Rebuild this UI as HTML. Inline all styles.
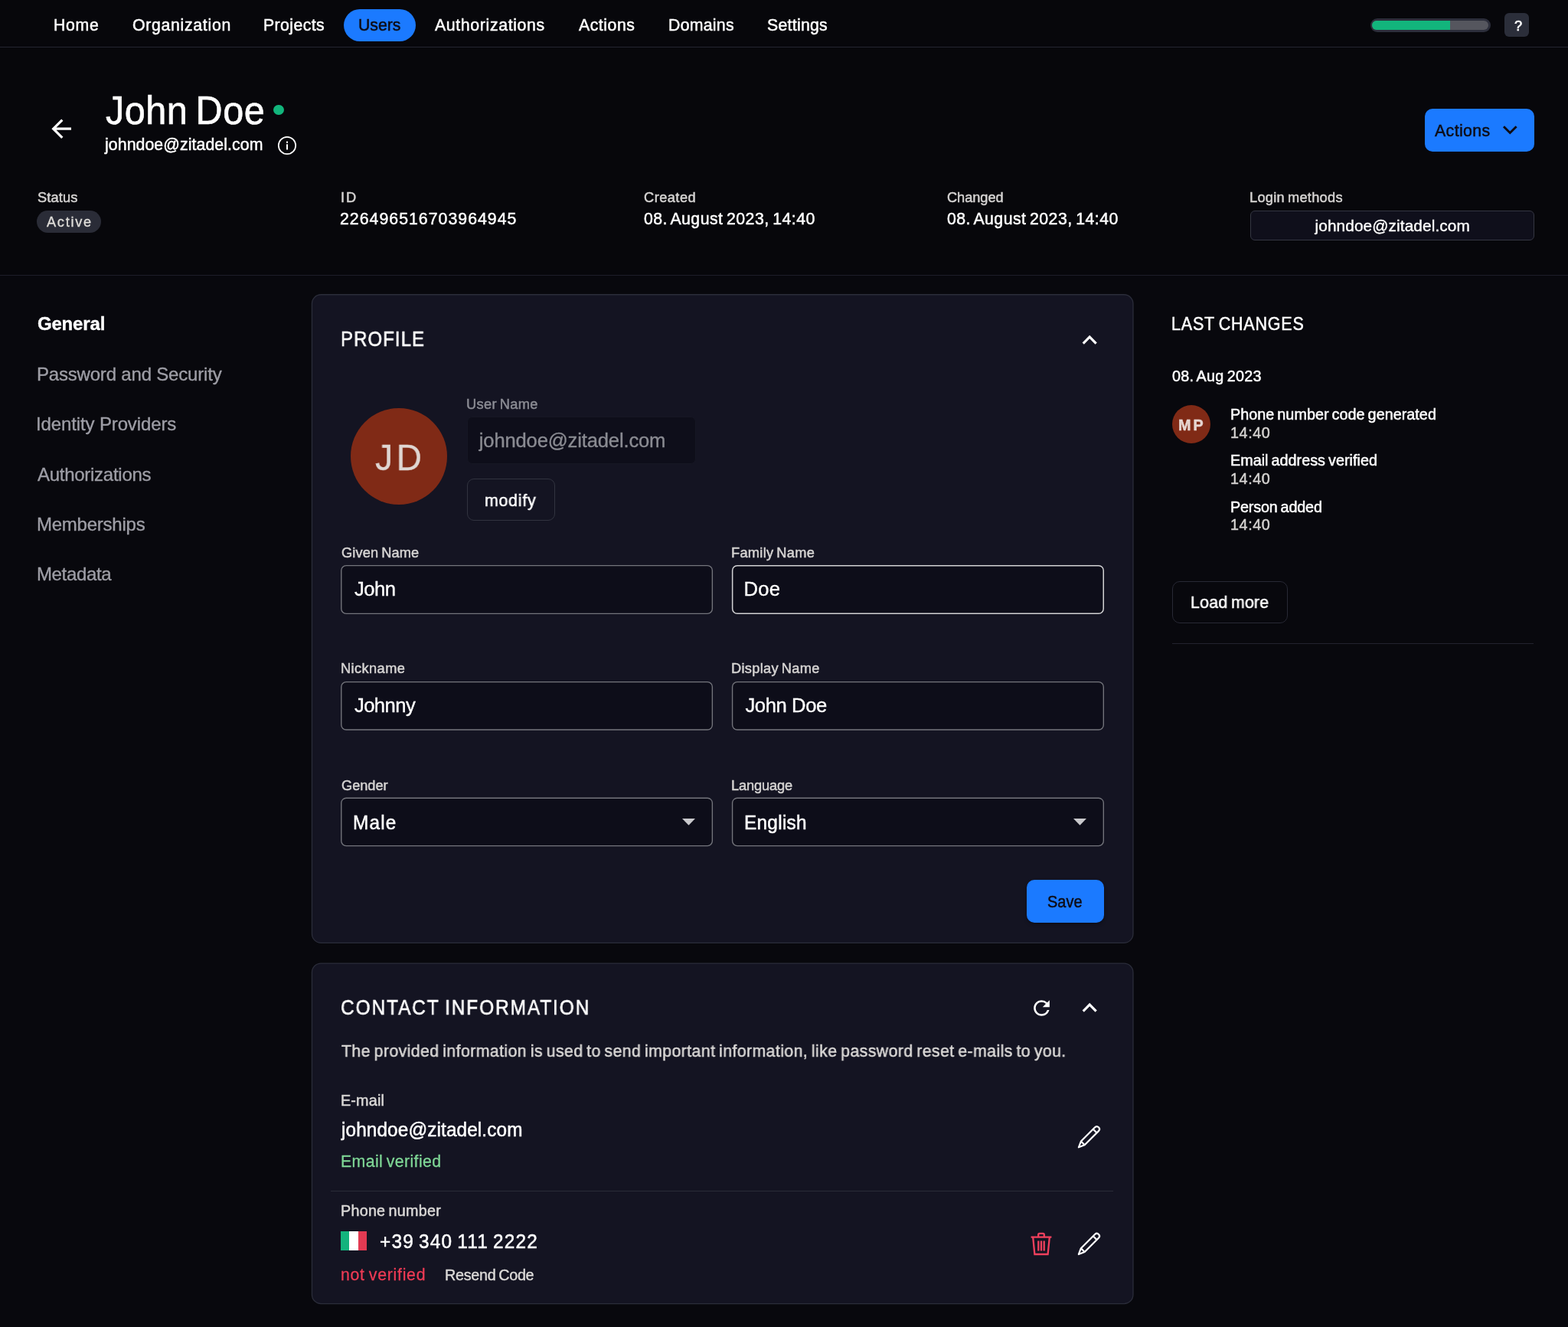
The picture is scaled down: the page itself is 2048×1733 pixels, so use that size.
<!DOCTYPE html>
<html lang="en"><head><meta charset="utf-8"><title>John Doe - Users</title>
<style>
html,body{margin:0;padding:0;}
body{width:2048px;height:1733px;overflow:hidden;background:#08080d;font-family:"Liberation Sans", sans-serif;position:relative;}
#app{position:absolute;left:0;top:0;width:2048px;height:1733px;overflow:hidden;will-change:transform;}
nav,header,aside,main,section{display:block;margin:0;padding:0;}
#app div,#app svg,.t{position:absolute;display:block;}
.t{margin:0;padding:0;border:0;background:none;font-family:inherit;font-weight:400;font-style:normal;text-decoration:none;text-align:left;text-transform:none;white-space:pre;line-height:1;transform-origin:0 0;cursor:default;-webkit-appearance:none;appearance:none;box-sizing:content-box;overflow:visible;}
</style></head>
<body><div id="app">
<nav aria-label="Main">
<div style="left:0px;top:0px;width:2048px;height:61px;background:#07070b"></div>
<div style="left:0px;top:61px;width:2048px;height:1px;background:#242531"></div>
<div style="left:449.2px;top:11.7px;width:93.4px;height:42.5px;background:#1b7aff;border-radius:22px"></div>
<div style="left:1789.5px;top:24px;width:157px;height:18px;background:#2c2e3b;border-radius:9px"></div>
<div style="left:1792px;top:26.8px;width:152.3px;height:12.4px;background:#55565e;border-radius:6.2px;overflow:hidden"></div>
<div style="left:1792px;top:26.8px;width:102px;height:12.4px;background:#12b57c;border-radius:6.2px 0 0 6.2px"></div>
<div style="left:1965px;top:16.6px;width:32px;height:31.8px;background:#2b2e3a;border-radius:6px"></div>
<a class="t" style="left:69.95px;top:22px;font-size:22.4px;color:#ffffff;letter-spacing:0.716px;-webkit-text-stroke:0.5px;transform:scaleX(0.95);">Home</a>
<a class="t" style="left:172.55px;top:22px;font-size:22.4px;color:#ffffff;letter-spacing:0.730px;-webkit-text-stroke:0.5px;transform:scaleX(0.95);">Organization</a>
<a class="t" style="left:343.95px;top:22px;font-size:22.4px;color:#ffffff;letter-spacing:0.421px;-webkit-text-stroke:0.5px;transform:scaleX(0.95);">Projects</a>
<a class="t" style="left:467.85px;top:22px;font-size:22.4px;color:#0e0c14;letter-spacing:-0.055px;-webkit-text-stroke:0.5px;transform:scaleX(0.95);">Users</a>
<a class="t" style="left:568.00px;top:22px;font-size:22.4px;color:#ffffff;letter-spacing:0.680px;-webkit-text-stroke:0.5px;transform:scaleX(0.95);">Authorizations</a>
<a class="t" style="left:755.50px;top:22px;font-size:22.4px;color:#ffffff;letter-spacing:0.549px;-webkit-text-stroke:0.5px;transform:scaleX(0.95);">Actions</a>
<a class="t" style="left:872.65px;top:22px;font-size:22.4px;color:#ffffff;letter-spacing:0.281px;-webkit-text-stroke:0.5px;transform:scaleX(0.95);">Domains</a>
<a class="t" style="left:1001.85px;top:22px;font-size:22.4px;color:#ffffff;letter-spacing:0.282px;-webkit-text-stroke:0.5px;transform:scaleX(0.95);">Settings</a>
<button class="t" style="left:1977.80px;top:24px;font-size:19.2px;color:#ffffff;-webkit-text-stroke:0.6px;transform:scaleX(0.95);">?</button>
</nav>
<header>
<div style="left:0px;top:62px;width:2048px;height:297px;background:#07070b"></div>
<div style="left:0px;top:359px;width:2048px;height:1px;background:#1d1e29"></div>
<div style="left:357px;top:136.5px;width:13.6px;height:13.6px;background:#12b57c;border-radius:50%"></div>
<svg style="left:61px;top:149.2px" width="38.4" height="38.4" viewBox="0 0 24 24"><path fill="#fff" d="M20 11H7.83l5.59-5.59L12 4l-8 8 8 8 1.41-1.41L7.83 13H20v-2z"/></svg>
<svg style="left:361.7px;top:176.8px" width="26" height="26" viewBox="0 0 26 26"><circle cx="13" cy="13" r="11.2" fill="none" stroke="#fff" stroke-width="1.7"/><rect x="12" y="11.3" width="2" height="7.2" fill="#fff"/><rect x="12" y="7.6" width="2" height="2.2" fill="#fff"/></svg>
<div style="left:1861px;top:142px;width:142.5px;height:56px;background:#1b7aff;border-radius:10px"></div>
<svg style="left:1960px;top:160px" width="25" height="19" viewBox="0 0 25 19"><path d="M4 5.2 L12.3 13.5 L20.6 5.2" fill="none" stroke="#0e0c14" stroke-width="3"/></svg>
<div style="left:48.3px;top:275px;width:83.5px;height:28.8px;background:#2a2c37;border-radius:14.4px"></div>
<div style="left:1633px;top:275px;width:370.5px;height:38.5px;background:#0f0f1b;border:1px solid #343642;border-radius:6px;box-sizing:border-box"></div>
<h1 class="t" style="left:137.50px;top:119px;font-size:51.2px;color:#ffffff;letter-spacing:0.478px;word-spacing:-3.84px;-webkit-text-stroke:0.6px;transform:scaleX(0.95);">John Doe</h1>
<span class="t" style="left:137.25px;top:178px;font-size:22.4px;color:#ffffff;letter-spacing:0.087px;-webkit-text-stroke:0.5px;transform:scaleX(0.95);">johndoe@zitadel.com</span>
<button class="t" style="left:1874.00px;top:160px;font-size:22.4px;color:#0e0c14;letter-spacing:0.427px;-webkit-text-stroke:0.5px;transform:scaleX(0.95);">Actions</button>
<label class="t" style="left:48.80px;top:248px;font-size:19.2px;color:#d6d4d3;letter-spacing:0.124px;-webkit-text-stroke:0.5px;transform:scaleX(0.95);">Status</label>
<span class="t" style="left:61.30px;top:280px;font-size:19.2px;color:#e0deda;letter-spacing:1.789px;-webkit-text-stroke:0.3px;transform:scaleX(0.95);">Active</span>
<label class="t" style="left:444.55px;top:248px;font-size:19.2px;color:#d6d4d3;letter-spacing:2.143px;-webkit-text-stroke:0.5px;transform:scaleX(0.95);">ID</label>
<span class="t" style="left:444.05px;top:275px;font-size:22.4px;color:#ffffff;letter-spacing:1.080px;-webkit-text-stroke:0.5px;transform:scaleX(0.95);">226496516703964945</span>
<label class="t" style="left:840.50px;top:248px;font-size:19.2px;color:#d6d4d3;letter-spacing:0.489px;-webkit-text-stroke:0.5px;transform:scaleX(0.95);">Created</label>
<span class="t" style="left:840.50px;top:275px;font-size:22.4px;color:#ffffff;letter-spacing:0.463px;word-spacing:-1.68px;-webkit-text-stroke:0.5px;transform:scaleX(0.95);">08. August 2023, 14:40</span>
<label class="t" style="left:1236.50px;top:248px;font-size:19.2px;color:#d6d4d3;letter-spacing:-0.062px;-webkit-text-stroke:0.5px;transform:scaleX(0.95);">Changed</label>
<span class="t" style="left:1236.50px;top:275px;font-size:22.4px;color:#ffffff;letter-spacing:0.463px;word-spacing:-1.68px;-webkit-text-stroke:0.5px;transform:scaleX(0.95);">08. August 2023, 14:40</span>
<label class="t" style="left:1632.05px;top:248px;font-size:19.2px;color:#d6d4d3;letter-spacing:0.290px;word-spacing:-1.44px;-webkit-text-stroke:0.5px;transform:scaleX(0.95);">Login methods</label>
<span class="t" style="left:1717.50px;top:285px;font-size:20.8px;color:#ffffff;letter-spacing:0.112px;-webkit-text-stroke:0.35px;">johndoe@zitadel.com</span>
</header>
<aside aria-label="User sections">
<a class="t" style="left:48.90px;top:411px;font-size:24px;color:#ffffff;font-weight:700;letter-spacing:-0.152px;-webkit-text-stroke:0.35px;">General</a>
<a class="t" style="left:47.90px;top:477px;font-size:24px;color:#9e9ea6;letter-spacing:-0.182px;-webkit-text-stroke:0.35px;">Password and Security</a>
<a class="t" style="left:46.90px;top:542px;font-size:24px;color:#9e9ea6;letter-spacing:-0.118px;-webkit-text-stroke:0.35px;">Identity Providers</a>
<a class="t" style="left:48.90px;top:608px;font-size:24px;color:#9e9ea6;letter-spacing:-0.260px;-webkit-text-stroke:0.35px;">Authorizations</a>
<a class="t" style="left:47.90px;top:673px;font-size:24px;color:#9e9ea6;letter-spacing:-0.225px;-webkit-text-stroke:0.35px;">Memberships</a>
<a class="t" style="left:47.90px;top:738px;font-size:24px;color:#9e9ea6;letter-spacing:-0.331px;-webkit-text-stroke:0.35px;">Metadata</a>
</aside>
<main>
<section aria-label="Profile">
<svg style="left:404px;top:382px" width="1079" height="852" viewBox="404 382 1079 852"><rect x="407.45" y="384.75" width="1072.5" height="846.6" rx="11.85" fill="#141422" stroke="#2b2d3a" stroke-width="1.3"/></svg>
<svg style="left:1403.8px;top:424.98px" width="38.4" height="38.4" viewBox="0 0 24 24"><path fill="#fff" d="M12 8l-6 6 1.41 1.41L12 10.83l4.59 4.58L18 14z"/></svg>
<div style="left:458px;top:533.1px;width:125.8px;height:125.8px;background:#802a16;border-radius:50%"></div>
<div style="left:609.5px;top:543.5px;width:299.1px;height:62.9px;background:#0e0e1a;border:1px solid #161724;border-radius:7px;box-sizing:border-box"></div>
<div style="left:609.5px;top:625.3px;width:115.9px;height:54.9px;border:1px solid #31333f;border-radius:9px;box-sizing:border-box"></div>
<svg style="left:443px;top:735px" width="491" height="70" viewBox="443 735 491 70"><rect x="445.775" y="738.575" width="484.6" height="62.85" rx="6.325" fill="#0d0d19" stroke="#74757c" stroke-width="1.35"/></svg>
<svg style="left:953px;top:735px" width="491" height="70" viewBox="953 735 491 70"><rect x="956.65" y="738.65" width="484.6" height="62.7" rx="6.25" fill="#0d0d19" stroke="#d2d2d4" stroke-width="1.5"/></svg>
<svg style="left:443px;top:887px" width="491" height="69" viewBox="443 887 491 69"><rect x="445.775" y="890.575" width="484.6" height="62.45" rx="6.325" fill="#0d0d19" stroke="#74757c" stroke-width="1.35"/></svg>
<svg style="left:953px;top:887px" width="491" height="69" viewBox="953 887 491 69"><rect x="956.575" y="890.575" width="484.75" height="62.45" rx="6.325" fill="#0d0d19" stroke="#74757c" stroke-width="1.35"/></svg>
<svg style="left:443px;top:1039px" width="491" height="69" viewBox="443 1039 491 69"><rect x="445.775" y="1042.27" width="484.6" height="62.35" rx="6.325" fill="#0d0d19" stroke="#74757c" stroke-width="1.35"/></svg>
<svg style="left:953px;top:1039px" width="491" height="69" viewBox="953 1039 491 69"><rect x="956.575" y="1042.27" width="484.75" height="62.35" rx="6.325" fill="#0d0d19" stroke="#74757c" stroke-width="1.35"/></svg>
<svg style="left:891.1px;top:1068.8px" width="17" height="9" viewBox="0 0 17 9"><path fill="#c9c9cd" d="M0 0h17L8.5 8.7z"/></svg>
<svg style="left:1402.1px;top:1068.8px" width="17" height="9" viewBox="0 0 17 9"><path fill="#c9c9cd" d="M0 0h17L8.5 8.7z"/></svg>
<div style="left:1341.2px;top:1148.9px;width:100.8px;height:56.6px;background:#1b7aff;border-radius:10px;box-shadow:0 2px 4px rgba(0,0,0,.35)"></div>
<h2 class="t" style="left:445.04px;top:429px;font-size:27.2px;color:#ffffff;letter-spacing:1.267px;-webkit-text-stroke:0.55px;transform:scaleX(0.88);">PROFILE</h2>
<span class="t" style="left:490.20px;top:573px;font-size:48.6px;color:#dfd6d2;letter-spacing:4.598px;-webkit-text-stroke:0.3px;transform:scaleX(0.95);">JD</span>
<label class="t" style="left:608.55px;top:518px;font-size:19.2px;color:#8b8c94;letter-spacing:0.340px;word-spacing:-1.44px;-webkit-text-stroke:0.5px;transform:scaleX(0.95);">User Name</label>
<span class="t" style="left:625.80px;top:563px;font-size:25.6px;color:#8a8b92;letter-spacing:-0.161px;-webkit-text-stroke:0.35px;">johndoe@zitadel.com</span>
<button class="t" style="left:633.35px;top:643px;font-size:22.4px;color:#ffffff;letter-spacing:0.850px;-webkit-text-stroke:0.5px;transform:scaleX(0.95);">modify</button>
<label class="t" style="left:445.70px;top:712px;font-size:19.2px;color:#d6d4d3;letter-spacing:0.152px;word-spacing:-1.44px;-webkit-text-stroke:0.5px;transform:scaleX(0.95);">Given Name</label>
<span class="t" style="left:462.90px;top:757px;font-size:25.6px;color:#ffffff;letter-spacing:-0.488px;-webkit-text-stroke:0.35px;">John</span>
<label class="t" style="left:955.45px;top:712px;font-size:19.2px;color:#d6d4d3;letter-spacing:0.295px;word-spacing:-1.44px;-webkit-text-stroke:0.5px;transform:scaleX(0.95);">Family Name</label>
<span class="t" style="left:971.40px;top:757px;font-size:25.6px;color:#ffffff;letter-spacing:0.341px;-webkit-text-stroke:0.35px;">Doe</span>
<label class="t" style="left:444.75px;top:863px;font-size:19.2px;color:#d6d4d3;letter-spacing:0.428px;-webkit-text-stroke:0.5px;transform:scaleX(0.95);">Nickname</label>
<span class="t" style="left:462.90px;top:909px;font-size:25.6px;color:#ffffff;letter-spacing:-0.527px;-webkit-text-stroke:0.35px;">Johnny</span>
<label class="t" style="left:955.45px;top:863px;font-size:19.2px;color:#d6d4d3;letter-spacing:0.316px;word-spacing:-1.44px;-webkit-text-stroke:0.5px;transform:scaleX(0.95);">Display Name</label>
<span class="t" style="left:973.40px;top:909px;font-size:25.6px;color:#ffffff;letter-spacing:-0.390px;-webkit-text-stroke:0.35px;">John Doe</span>
<label class="t" style="left:445.70px;top:1016px;font-size:19.2px;color:#d6d4d3;letter-spacing:-0.038px;-webkit-text-stroke:0.5px;transform:scaleX(0.95);">Gender</label>
<span class="t" style="left:461.00px;top:1062px;font-size:25.6px;color:#ffffff;letter-spacing:1.271px;-webkit-text-stroke:0.5px;transform:scaleX(0.95);">Male</span>
<label class="t" style="left:955.45px;top:1016px;font-size:19.2px;color:#d6d4d3;letter-spacing:-0.152px;-webkit-text-stroke:0.5px;transform:scaleX(0.95);">Language</label>
<span class="t" style="left:971.70px;top:1062px;font-size:25.6px;color:#ffffff;letter-spacing:0.321px;-webkit-text-stroke:0.5px;transform:scaleX(0.95);">English</span>
<button class="t" style="left:1368.41px;top:1167px;font-size:22.4px;color:#0e0c14;letter-spacing:0.064px;-webkit-text-stroke:0.5px;transform:scaleX(0.89);">Save</button>
</section>
<section aria-label="Contact information">
<svg style="left:404px;top:1255px" width="1079" height="451" viewBox="404 1255 1079 451"><rect x="407.45" y="1258.05" width="1072.5" height="444.5" rx="11.85" fill="#141422" stroke="#2b2d3a" stroke-width="1.3"/></svg>
<svg style="left:1344.8px;top:1300.5px" width="31" height="31" viewBox="0 0 24 24"><path fill="#fff" d="M17.65 6.35A7.958 7.958 0 0 0 12 4c-4.42 0-7.99 3.58-7.99 8s3.57 8 7.99 8c3.73 0 6.84-2.55 7.73-6h-2.08A5.99 5.99 0 0 1 12 18c-3.31 0-6-2.69-6-6s2.69-6 6-6c1.66 0 3.14.69 4.22 1.78L13 11h7V4l-2.35 2.35z"/></svg>
<svg style="left:1403.5px;top:1297.08px" width="38.4" height="38.4" viewBox="0 0 24 24"><path fill="#fff" d="M12 8l-6 6 1.41 1.41L12 10.83l4.59 4.58L18 14z"/></svg>
<div style="left:432.3px;top:1555px;width:1021.9px;height:1px;background:#2a2b38"></div>
<div style="left:445.1px;top:1608px;width:11.3px;height:25.1px;background:#14b37d"></div>
<div style="left:456.4px;top:1608px;width:11.2px;height:25.1px;background:#ffffff"></div>
<div style="left:467.6px;top:1608px;width:11.2px;height:25.1px;background:#e23a52"></div>
<svg style="left:1405px;top:1467px" width="35" height="35" viewBox="1405 1467 35 35"><path d="M1408.90 1498.30 L1411.87 1490.52 L1430.33 1472.07 A3.4 3.4 0 0 1 1435.13 1476.87 L1416.68 1495.33 Z M1411.87 1490.52 L1416.68 1495.33 M1427.78 1474.61 L1432.59 1479.42" fill="none" stroke="#fff" stroke-width="2.2" stroke-linejoin="round" stroke-linecap="round"/></svg>
<svg style="left:1405px;top:1607px" width="35" height="34" viewBox="1405 1607 35 34"><path d="M1408.90 1638.00 L1411.87 1630.22 L1430.33 1611.77 A3.4 3.4 0 0 1 1435.13 1616.57 L1416.68 1635.03 Z M1411.87 1630.22 L1416.68 1635.03 M1427.78 1614.31 L1432.59 1619.12" fill="none" stroke="#fff" stroke-width="2.2" stroke-linejoin="round" stroke-linecap="round"/></svg>
<svg style="left:1344.6px;top:1608px" width="30" height="33" viewBox="0 0 30 33"><g fill="none" stroke="#f0405d" stroke-width="2.3" stroke-linejoin="miter"><path d="M1.6 7.6 H28.4"/><path d="M11.2 7.2 V4.5 a1.6 1.6 0 0 1 1.6 -1.6 h4.4 a1.6 1.6 0 0 1 1.6 1.6 V7.2"/><path d="M4.2 8 L6.4 30 H23.6 L25.8 8"/><path d="M11.3 12.5 V25.5 M15 12.5 V25.5 M18.7 12.5 V25.5"/></g></svg>
<h2 class="t" style="left:445.00px;top:1302px;font-size:27.2px;color:#ffffff;letter-spacing:2.094px;word-spacing:-2.04px;-webkit-text-stroke:0.55px;transform:scaleX(0.9);">CONTACT INFORMATION</h2>
<p class="t" style="left:445.90px;top:1362px;font-size:22.4px;color:#dbd9d7;letter-spacing:0.435px;word-spacing:-1.68px;-webkit-text-stroke:0.5px;transform:scaleX(0.95);">The provided information is used to send important information, like password reset e-mails to you.</p>
<label class="t" style="left:444.95px;top:1427px;font-size:20.8px;color:#dbd9d7;letter-spacing:0.181px;-webkit-text-stroke:0.5px;transform:scaleX(0.95);">E-mail</label>
<span class="t" style="left:445.95px;top:1463px;font-size:25.6px;color:#ffffff;letter-spacing:0.130px;-webkit-text-stroke:0.5px;transform:scaleX(0.95);">johndoe@zitadel.com</span>
<span class="t" style="left:444.95px;top:1506px;font-size:22.4px;color:#7fd796;letter-spacing:0.405px;word-spacing:-1.68px;-webkit-text-stroke:0.3px;transform:scaleX(0.95);">Email verified</span>
<label class="t" style="left:444.95px;top:1571px;font-size:20.8px;color:#dbd9d7;letter-spacing:0.254px;word-spacing:-1.56px;-webkit-text-stroke:0.5px;transform:scaleX(0.95);">Phone number</label>
<span class="t" style="left:495.55px;top:1609px;font-size:25.6px;color:#ffffff;letter-spacing:1.275px;word-spacing:-1.92px;-webkit-text-stroke:0.5px;transform:scaleX(0.95);">+39 340 111 2222</span>
<span class="t" style="left:444.95px;top:1654px;font-size:22.4px;color:#ee3b55;letter-spacing:0.768px;word-spacing:-1.68px;-webkit-text-stroke:0.3px;transform:scaleX(0.95);">not verified</span>
<button class="t" style="left:580.65px;top:1655px;font-size:20.8px;color:#dddbd9;letter-spacing:-0.289px;word-spacing:-1.56px;-webkit-text-stroke:0.4px;transform:scaleX(0.95);">Resend Code</button>
</section>
</main>
<aside aria-label="Last changes">
<div style="left:1531px;top:529px;width:50px;height:50px;background:#802a16;border-radius:50%"></div>
<div style="left:1531px;top:759.4px;width:150.7px;height:54.2px;border:1px solid #282935;border-radius:10px;box-sizing:border-box"></div>
<div style="left:1531px;top:840px;width:472.4px;height:1px;background:#22232e"></div>
<h2 class="t" style="left:1530.08px;top:412px;font-size:23.4px;color:#ffffff;letter-spacing:0.847px;word-spacing:-1.75px;-webkit-text-stroke:0.5px;transform:scaleX(0.92);">LAST CHANGES</h2>
<time class="t" style="left:1531.00px;top:481px;font-size:20.8px;color:#ffffff;letter-spacing:0.292px;word-spacing:-1.56px;-webkit-text-stroke:0.5px;transform:scaleX(0.95);">08. Aug 2023</time>
<span class="t" style="left:1538.65px;top:545px;font-size:20.8px;color:#e6d6d1;font-weight:700;letter-spacing:3.150px;-webkit-text-stroke:0.5px;transform:scaleX(0.95);">MP</span>
<span class="t" style="left:1607.15px;top:531px;font-size:20.8px;color:#ffffff;letter-spacing:0.037px;word-spacing:-1.56px;-webkit-text-stroke:0.5px;transform:scaleX(0.95);">Phone number code generated</span>
<time class="t" style="left:1607.15px;top:555px;font-size:20.8px;color:#d5d3d1;letter-spacing:0.618px;-webkit-text-stroke:0.5px;transform:scaleX(0.95);">14:40</time>
<span class="t" style="left:1607.15px;top:591px;font-size:20.8px;color:#ffffff;letter-spacing:0.025px;word-spacing:-1.56px;-webkit-text-stroke:0.5px;transform:scaleX(0.95);">Email address verified</span>
<time class="t" style="left:1607.15px;top:615px;font-size:20.8px;color:#d5d3d1;letter-spacing:0.618px;-webkit-text-stroke:0.5px;transform:scaleX(0.95);">14:40</time>
<span class="t" style="left:1607.15px;top:652px;font-size:20.8px;color:#ffffff;letter-spacing:-0.159px;word-spacing:-1.56px;-webkit-text-stroke:0.5px;transform:scaleX(0.95);">Person added</span>
<time class="t" style="left:1607.15px;top:675px;font-size:20.8px;color:#d5d3d1;letter-spacing:0.618px;-webkit-text-stroke:0.5px;transform:scaleX(0.95);">14:40</time>
<button class="t" style="left:1555.25px;top:776px;font-size:22.4px;color:#ffffff;letter-spacing:0.274px;word-spacing:-1.68px;-webkit-text-stroke:0.5px;transform:scaleX(0.95);">Load more</button>
</aside>
</div></body></html>
